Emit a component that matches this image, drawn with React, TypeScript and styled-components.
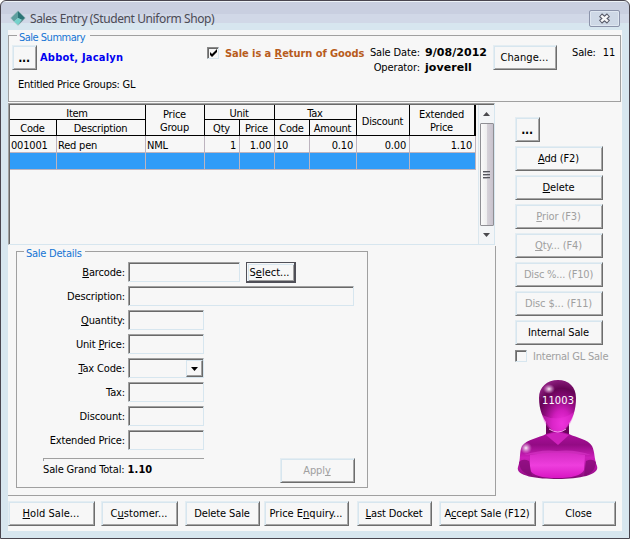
import React from "react";
import styled, { createGlobalStyle, css } from "styled-components";

const Global = createGlobalStyle`
  * { box-sizing: border-box; }
  html, body { margin: 0; padding: 0; background: #fff; }
  body {
    font-family: "DejaVu Sans Condensed", "DejaVu Sans", sans-serif;
    font-stretch: condensed;
    font-size: 11px;
    line-height: 14px;
    letter-spacing: -0.15px;
    color: #000;
    overflow: hidden;
  }
  u { text-decoration: underline; text-underline-offset: 1px; text-decoration-thickness: 1px; text-decoration-skip-ink: none; }
`;

const Window = styled.div`
  width: 630px;
  height: 539px;
  display: flex;
  flex-direction: column;
  padding: 0 7px 7px 7px;
  border: 1px solid #49454f;
  border-radius: 6px 6px 0 0;
  background: linear-gradient(#edf2f7 0 1px, #c9cfe0 1px 13px, #d1d8e7 13px 22px, #d7e6ef 22px);
`;

const TitleBar = styled.header`
  flex: none;
  height: 29px;
  display: flex;
  align-items: flex-start;
  padding: 9px 2px 0 2px;
`;

const Title = styled.h1`
  flex: 1;
  margin: 0 0 0 4px;
  font: 400 12px/17px "Noto Sans", sans-serif;
  letter-spacing: -0.4px;
  color: #4b4b55;
  white-space: nowrap;
`;

const CloseBox = styled.button`
  width: 31px;
  height: 17px;
  padding: 0;
  display: flex;
  align-items: center;
  justify-content: center;
  border: 1px solid #8b93aa;
  border-radius: 2px;
  background: #ced8e6;
  box-shadow: inset 0 0 0 1px #dfe7f1;
`;

const Client = styled.main`
  flex: 1;
  display: flex;
  flex-direction: column;
  background: #f7f7f7;
`;

const Legend = styled.div<{ $left: number; $width: number; $ls: number }>`
  flex: none;
  width: ${(p) => p.$width}px;
  height: 14px;
  line-height: 16px;
  margin: -6px 0 0 ${(p) => p.$left}px;
  padding-left: 2px;
  background: #f7f7f7;
  color: #1474d4;
  letter-spacing: ${(p) => p.$ls}px;
  white-space: nowrap;
`;

const Summary = styled.section`
  flex: none;
  width: 613px;
  height: 67px;
  margin-top: 5px;
  border: 1px solid #a0a0a0;
  display: flex;
  flex-direction: column;
`;

const SummaryRow = styled.div`
  display: flex;
  align-items: flex-start;
  height: 29px;
  margin: 1px 0 0 3px;
  white-space: nowrap;
  > * { flex-shrink: 0; }
`;

const Button = styled.button<{ $w: number; $ls?: number; $focus?: boolean }>`
  flex: none;
  width: ${(p) => p.$w}px;
  height: 25px;
  padding: 1px 1px 0 0;
  font: inherit;
  letter-spacing: ${(p) => p.$ls ?? -0.12}px;
  line-height: 14px;
  color: #000;
  background: #f7f7f7;
  white-space: nowrap;
  border: 1px solid;
  border-color: #e4edf2 #6d6d6d #6d6d6d #e4edf2;
  box-shadow: inset 1px 1px 0 #d7e6ef, inset -1px -1px 0 #a6a6a6;
  &:disabled { color: #a0a0a0; }
  ${(p) =>
    p.$focus &&
    css`
      height: 21px;
      padding: 1px 2px 0 0;
      border-color: #505058;
      border-width: 1px 2px 2px 1px;
      box-shadow: inset 1px 1px 0 #f7f7f7, inset 2px 2px 0 #d7e6ef, inset -1px -1px 0 #a0a0a0;
    `}
`;

const Dots = styled(Button)`
  font-weight: 700;
  font-size: 12px;
  letter-spacing: -0.2px;
`;

const Customer = styled.div`
  width: 167px;
  margin-top: 6px;
  padding-left: 3px;
  color: #0000f0;
  font-weight: 700;
  letter-spacing: 0.2px;
`;

const CheckBox = styled.span`
  flex: none;
  width: 12px;
  height: 12px;
  display: flex;
  align-items: center;
  justify-content: center;
  border: 1px solid;
  border-color: #8a8a8a #d7e6ef #d7e6ef #8a8a8a;
  box-shadow: inset 1px 1px 0 #696969;
`;

const ReturnCheck = styled.label`
  display: flex;
  align-items: center;
  gap: 6px;
  width: 158px;
  margin-top: 1px;
  margin-left: 3px;
  height: 14px;
  color: #b85c1c;
  font-weight: 700;
  letter-spacing: -0.06px;
`;

const CheckText = styled.span`
  padding-top: 2px;
`;

const Facts = styled.dl`
  display: grid;
  grid-template-columns: 55px 68px;
  column-gap: 5px;
  grid-auto-rows: 15px;
  margin: 1px 0 0 0;
  dt { text-align: right; letter-spacing: -0.12px; }
  dd {
    margin: 0;
    font-family: "DejaVu Sans", sans-serif;
    font-stretch: normal;
    font-weight: 700;
    letter-spacing: 0.05px;
  }
`;

const SaleNo = styled.div`
  display: flex;
  gap: 7px;
  margin: 1px 0 0 15px;
`;

const Groups = styled.div`
  margin: 4px 0 0 9px;
  letter-spacing: -0.25px;
`;

const Body = styled.div`
  flex: 1;
  display: flex;
  min-height: 0;
`;

const Left = styled.div`
  width: 488px;
  height: 394px;
  display: flex;
  flex-direction: column;
`;

const Grid = styled.div`
  flex: none;
  width: 487px;
  height: 142px;
  margin-top: 1px;
  display: flex;
  border: 1px solid;
  border-color: #a0a0a0 #d7e6ef #d7e6ef #a0a0a0;
  box-shadow: inset 1px 1px 0 #696969;
  padding: 1px 0 0 1px;
`;

const Cells = styled.div`
  flex: none;
  width: 466px;
  height: 65px;
  display: grid;
  grid-template-columns: 47px 89px 59px 35px 35px 35px 47px 53px 66px;
  grid-template-rows: 15px 16px 17px 17px;
`;

const Head = styled.div<{ $area: string; $last?: boolean }>`
  grid-area: ${(p) => p.$area};
  display: flex;
  align-items: center;
  justify-content: center;
  padding: 2px 1px 0 0;
  text-align: center;
  line-height: 13px;
  letter-spacing: -0.25px;
  border: solid #000;
  border-width: 0 ${(p) => (p.$last ? 2 : 1)}px 1px 0;
`;

const Cell = styled.div<{ $right?: boolean; $active?: boolean }>`
  padding: 3px 3px 0 1px;
  line-height: 13px;
  text-align: ${(p) => (p.$right ? "right" : "left")};
  letter-spacing: -0.2px;
  white-space: nowrap;
  border: solid #bdb4bf;
  border-width: 0 1px 1px 0;
  background: ${(p) => (p.$active ? "#309cf8" : "transparent")};
`;

const ScrollBar = styled.div`
  width: 16px;
  margin-left: 2px;
  display: flex;
  flex-direction: column;
  align-items: center;
  justify-content: space-between;
  background: #f3f5f7;
  border-left: 1px solid #dbe7ee;
`;

const ScrollArrow = styled.div`
  height: 18px;
  display: flex;
  align-items: center;
`;

const Thumb = styled.div`
  width: 14px;
  height: 103px;
  display: flex;
  flex-direction: column;
  align-items: center;
  justify-content: center;
  gap: 1px;
  border: 1px solid #8f8f94;
  border-radius: 1px;
  background: linear-gradient(90deg, #fafafa, #eeeeef 48%, #d6d2d9 52%, #c8c2cd);
`;

const Grip = styled.i`
  width: 7px;
  height: 2px;
  background: linear-gradient(#55555c 50%, #b0b0b8 50%);
`;

const Lower = styled.div`
  flex: 1;
  margin-top: 1px;
  border: solid #a0a0a0;
  border-width: 0 1px 1px 0;
`;

const Details = styled.section`
  width: 352px;
  height: 237px;
  margin: 5px 0 0 8px;
  border: 1px solid #a0a0a0;
  display: flex;
  flex-direction: column;
`;

const Fields = styled.div`
  display: flex;
  flex-direction: column;
  gap: 4px;
  margin-top: 2px;
`;

const Field = styled.div`
  display: flex;
  height: 20px;
`;

const FieldLabel = styled.label`
  width: 108px;
  margin-right: 3px;
  text-align: right;
  line-height: 22px;
  white-space: nowrap;
`;

const Input = styled.div<{ $w: number }>`
  width: ${(p) => p.$w}px;
  height: 20px;
  margin-right: 6px;
  display: flex;
  justify-content: flex-end;
  padding: 2px 2px 1px;
  border: 1px solid;
  border-color: #a0a0a0 #d7e6ef #d7e6ef #a0a0a0;
  box-shadow: inset 1px 1px 0 #696969;
`;

const DropButton = styled.div`
  width: 17px;
  margin: -1px -2px -1px 0;
  display: flex;
  align-items: center;
  justify-content: center;
  border: 1px solid;
  border-color: #d7e6ef #696969 #696969 #d7e6ef;
  box-shadow: inset -1px -1px 0 #a0a0a0;
`;

const TotalRow = styled.div`
  display: flex;
  justify-content: space-between;
  margin: 8px 12px 0 26px;
`;

const Total = styled.div`
  width: 161px;
  height: 24px;
  padding-top: 5px;
  white-space: nowrap;
  background: linear-gradient(#a0a0a0, #a0a0a0) 0 0 / 161px 1px no-repeat,
    linear-gradient(#a0a0a0, #a0a0a0) 0 0 / 1px 3px no-repeat;
  b { letter-spacing: 0.1px; }
`;

const Side = styled.aside`
  width: 110px;
  padding: 15px 0 0 19px;
  display: flex;
  flex-direction: column;
  gap: 4px;
`;

const GlCheck = styled.label`
  display: flex;
  align-items: center;
  gap: 6px;
  height: 14px;
  color: #a0a0a0;
  letter-spacing: -0.22px;
  white-space: nowrap;
`;

const Avatar = styled.svg`
  flex: none;
  margin: 10px 0 0 -1px;
`;

const Actions = styled.footer`
  flex: none;
  height: 35px;
  display: grid;
  grid-template-columns: 93px 84px 79px 93px 82px 103px 75px;
  align-items: start;
  padding-top: 5px;
`;

const PersonIcon = () => (
  <Avatar width="86" height="104" viewBox="514 377 86 104">
    <defs>
      <radialGradient id="head" cx=".62" cy=".84" r=".85">
        <stop offset="0" stopColor="#ee32dc" />
        <stop offset=".3" stopColor="#cf1cbc" />
        <stop offset=".58" stopColor="#8a0b7a" />
        <stop offset=".8" stopColor="#650455" />
        <stop offset="1" stopColor="#8a1c7c" />
      </radialGradient>
      <linearGradient id="body" x1="0" y1="0" x2="0" y2="1">
        <stop offset="0" stopColor="#b010a0" />
        <stop offset=".28" stopColor="#930b84" />
        <stop offset=".55" stopColor="#cc1fba" />
        <stop offset=".85" stopColor="#a51196" />
        <stop offset="1" stopColor="#7d0a70" />
      </linearGradient>
      <linearGradient id="chest" x1="0" y1="0" x2="0" y2="1">
        <stop offset="0" stopColor="#d42bc3" />
        <stop offset=".5" stopColor="#ee3edd" />
        <stop offset="1" stopColor="#d816c3" />
      </linearGradient>
      <radialGradient id="shine">
        <stop offset="0" stopColor="#fff" stopOpacity=".95" />
        <stop offset="1" stopColor="#f0a0e8" stopOpacity="0" />
      </radialGradient>
    </defs>
    <path d="M546 420h23v14l-11 9-12-8z" fill="#6b045c" />
    <path d="M546 434q11-5 23 0c8 4 19 5 23 12 3 6 2 13 5 20 3 9-18 13-39 13s-43-3-40-12c3-8 1-15 4-21 5-7 17-8 24-12z" fill="url(#body)" />
    <path d="M524 455q17-6 33-4 18-2 34 4-15-1-34-1t-33 1z" fill="#db38ca" opacity=".6" />
    <path d="M530 455q27-5 55 0l-1 15q-4 8-27 8t-27-8z" fill="url(#chest)" />
    <path d="M519 462c0 7 5 12 13 14l-3-15q-6-3-10 1zM596 462c0 7-5 12-12 14l2-15q6-3 10 1z" fill="#7d0a70" opacity=".7" />
    <path d="M546 435q11-5 23 0l-11 10z" fill="#cf22bd" />
    <path d="M558 380c11 0 18 7 18 18 0 12-3 20-8 27-5 8-14 10-20 0-5-7-9-15-9-27 0-11 8-18 19-18z" fill="url(#head)" />
    <path d="M542 415q17 8 32-3c-1 10-8 20-16 21-8-1-14-9-16-18z" fill="#ee35dd" opacity=".4" />
    <path d="M549 429q9 6 17 0" fill="none" stroke="#f79aee" strokeWidth="1" />
    <ellipse cx="549" cy="389" rx="6" ry="5" fill="url(#shine)" />
    <ellipse cx="526" cy="448" rx="6" ry="6" fill="url(#shine)" />
    <text x="542" y="404" fontSize="11" textLength="32" fill="#fff" letterSpacing="0">11003</text>
  </Avatar>
);

export default function App() {
  return (
    <>
      <Global />
      <Window>
        <TitleBar>
          <svg width="16" height="16" viewBox="0 0 16 16">
            <path d="M8 0 16 8 8 16 0 8z" fill="#b9c9cf" />
            <path d="M8 1v7l-4 3.500-3-3.500z" fill="#5f9f9f" />
            <path d="M8 1l7 7-3 2-4-2z" fill="#2b7476" />
            <path d="M8 8l4 2-4 5-4-3.500z" fill="#74d2cc" />
            <path d="M15 8l-7 7 4-5z" fill="#276265" />
          </svg>
          <Title>Sales Entry (Student Uniform Shop)</Title>
          <CloseBox aria-label="Close window">
            <svg width="13" height="11" viewBox="0 0 13 11">
              <path d="M2.500 2 10.500 9M10.500 2 2.500 9" stroke="#555866" strokeWidth="4.600" />
              <path d="M3.200 2.600 9.800 8.400M9.800 2.600 3.200 8.400" stroke="#f7f7f9" strokeWidth="2.500" />
            </svg>
          </CloseBox>
        </TitleBar>
        <Client>
          <Summary>
            <Legend $left={8} $width={73} $ls={-0.5}>Sale Summary</Legend>
            <SummaryRow>
              <Dots $w={25}>...</Dots>
              <Customer>Abbot, Jacalyn</Customer>
              <ReturnCheck>
                <CheckBox>
                  <svg width="9" height="9" viewBox="0 0 9 9">
                    <path d="M1 3v3l2 2 5-5V0L3 5z" fill="#000" />
                  </svg>
                </CheckBox>
                <CheckText>Sale is a <u>R</u>eturn of Goods</CheckText>
              </ReturnCheck>
              <Facts>
                <dt>Sale Date:</dt>
                <dd>9/08/2012</dd>
                <dt>Operator:</dt>
                <dd>joverell</dd>
              </Facts>
              <Button $w={64} $ls={0.1}>Change...</Button>
              <SaleNo>
                <span>Sale:</span>
                <span>11</span>
              </SaleNo>
            </SummaryRow>
            <Groups>Entitled Price Groups: GL</Groups>
          </Summary>
          <Body>
            <Left>
              <Grid>
                <Cells>
                  <Head $area="1 / 1 / 2 / 3">Item</Head>
                  <Head $area="2 / 1 / 3 / 2">Code</Head>
                  <Head $area="2 / 2 / 3 / 3">Description</Head>
                  <Head $area="1 / 3 / 3 / 4">Price<br />Group</Head>
                  <Head $area="1 / 4 / 2 / 6">Unit</Head>
                  <Head $area="2 / 4 / 3 / 5">Qty</Head>
                  <Head $area="2 / 5 / 3 / 6">Price</Head>
                  <Head $area="1 / 6 / 2 / 8">Tax</Head>
                  <Head $area="2 / 6 / 3 / 7">Code</Head>
                  <Head $area="2 / 7 / 3 / 8">Amount</Head>
                  <Head $area="1 / 8 / 3 / 9">Discount</Head>
                  <Head $area="1 / 9 / 3 / 10" $last>Extended<br />Price</Head>
                  <Cell>001001</Cell>
                  <Cell>Red pen</Cell>
                  <Cell>NML</Cell>
                  <Cell $right>1</Cell>
                  <Cell $right>1.00</Cell>
                  <Cell>10</Cell>
                  <Cell $right>0.10</Cell>
                  <Cell $right>0.00</Cell>
                  <Cell $right>1.10</Cell>
                  {Array.from({ length: 9 }, (_, i) => (
                    <Cell key={i} $active />
                  ))}
                </Cells>
                <ScrollBar>
                  <ScrollArrow>
                    <svg width="7" height="4"><path d="M0 4 3.500 0 7 4z" fill="#4a4a4e" /></svg>
                  </ScrollArrow>
                  <Thumb><Grip /><Grip /><Grip /></Thumb>
                  <ScrollArrow>
                    <svg width="7" height="4"><path d="M0 0 3.500 4 7 0z" fill="#4a4a4e" /></svg>
                  </ScrollArrow>
                </ScrollBar>
              </Grid>
              <Lower>
                <Details>
                  <Legend $left={7} $width={61} $ls={-0.25}>Sale Details</Legend>
                  <Fields>
                    <Field>
                      <FieldLabel><u>B</u>arcode:</FieldLabel>
                      <Input $w={112} />
                      <Button $w={50} $focus $ls={0}>S<u>e</u>lect...</Button>
                    </Field>
                    <Field><FieldLabel>Description:</FieldLabel><Input $w={226} /></Field>
                    <Field><FieldLabel><u>Q</u>uantity:</FieldLabel><Input $w={76} /></Field>
                    <Field><FieldLabel>Unit <u>P</u>rice:</FieldLabel><Input $w={76} /></Field>
                    <Field>
                      <FieldLabel><u>T</u>ax Code:</FieldLabel>
                      <Input $w={76}>
                        <DropButton>
                          <svg width="7" height="4"><path d="M0 0h7L3.500 4z" /></svg>
                        </DropButton>
                      </Input>
                    </Field>
                    <Field><FieldLabel>Tax:</FieldLabel><Input $w={76} /></Field>
                    <Field><FieldLabel>Discount:</FieldLabel><Input $w={76} /></Field>
                    <Field><FieldLabel>Extended Price:</FieldLabel><Input $w={76} /></Field>
                  </Fields>
                  <TotalRow>
                    <Total>Sale Grand Total: <b>1.10</b></Total>
                    <Button $w={75} disabled>Appl<u>y</u></Button>
                  </TotalRow>
                </Details>
              </Lower>
            </Left>
            <Side>
              <Dots $w={25}>...</Dots>
              <Button $w={88}><u>A</u>dd (F2)</Button>
              <Button $w={88}><u>D</u>elete</Button>
              <Button $w={88} disabled><u>P</u>rior (F3)</Button>
              <Button $w={88} disabled><u>Q</u>ty... (F4)</Button>
              <Button $w={88} disabled $ls={-0.2}>Disc %... (F10)</Button>
              <Button $w={88} disabled>Disc $... (F11)</Button>
              <Button $w={88}>Internal Sale</Button>
              <GlCheck><CheckBox /><CheckText>Internal GL Sale</CheckText></GlCheck>
              <PersonIcon />
            </Side>
          </Body>
          <Actions>
            <Button $w={87} $ls={0.05}><u>H</u>old Sale...</Button>
            <Button $w={77} $ls={0.05}>C<u>u</u>stomer...</Button>
            <Button $w={75}>Delete Sale</Button>
            <Button $w={85} $ls={0}>Price E<u>n</u>quiry...</Button>
            <Button $w={75}><u>L</u>ast Docket</Button>
            <Button $w={97}>A<u>c</u>cept Sale (F12)</Button>
            <Button $w={74}>Close</Button>
          </Actions>
        </Client>
      </Window>
    </>
  );
}
